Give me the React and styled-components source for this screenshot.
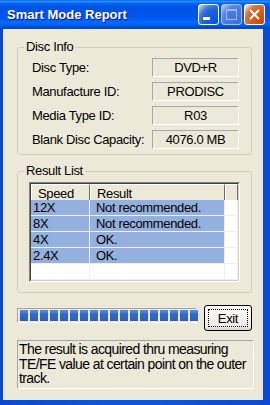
import React from 'react';
import styled, { createGlobalStyle, css } from 'styled-components';

const Global = createGlobalStyle`
  html, body {
    margin: 0;
    padding: 0;
    width: 270px;
    height: 405px;
    overflow: hidden;
    background: #0c55e0;
  }
  body {
    font-family: "Liberation Sans", Arial, sans-serif;
    font-size: 13px;
    letter-spacing: -0.35px;
    color: #000;
  }
`;

const discInfo = [
  ['Disc Type:', 'DVD+R'],
  ['Manufacture ID:', 'PRODISC'],
  ['Media Type ID:', 'R03'],
  ['Blank Disc Capacity:', '4076.0 MB'],
];

const results = [
  ['12X', 'Not recommended.'],
  ['8X', 'Not recommended.'],
  ['4X', 'OK.'],
  ['2.4X', 'OK.'],
];

const Window = styled.div`
  width: 270px;
  height: 405px;
  display: flex;
  flex-direction: column;
  background: linear-gradient(90deg, #0a49d6 0%, #0c55e0 40%, #0c55e0 60%, #0a49d6 100%);
`;

const TitleBar = styled.div`
  height: 29px;
  flex: none;
  display: flex;
  align-items: center;
  justify-content: space-between;
  background: linear-gradient(
    to bottom,
    #0058ee 0%, #3593ff 4%, #288eff 6%, #127dff 8%, #036ffc 10%,
    #0262ee 14%, #0057e5 20%, #0054e3 24%, #0055eb 56%, #005bf5 66%,
    #026afe 76%, #0062ef 86%, #0052d6 92%, #0046c4 96%, #0a49d6 100%
  );
`;

const Title = styled.div`
  padding-left: 7px;
  color: #fff;
  font-weight: bold;
  font-size: 13px;
  letter-spacing: 0;
  text-shadow: 1px 1px #0f1089;
`;

const Controls = styled.div`
  display: flex;
  gap: 2px;
  margin-right: 5px;
`;

const capStyles = {
  min: css`
    background: radial-gradient(circle at 90% 90%, #0054e9 0%, #2263d5 55%, #4479e4 70%, #a3bbec 90%, #fff 100%);
  `,
  max: css`
    background: radial-gradient(circle at 90% 90%, #3d6fe0 0%, #4a7ae0 55%, #5a86e6 70%, #9fb7ec 90%, #c9d6f4 100%);
    border-color: #a9bff0;
  `,
  close: css`
    background: radial-gradient(circle at 90% 90%, #cc4600 0%, #dc6527 55%, #cd7546 70%, #ffccb2 90%, #fff 100%);
  `,
};

const CapButton = styled.div`
  width: 21px;
  height: 21px;
  box-sizing: border-box;
  border: 1px solid #fff;
  border-radius: 3px;
  display: flex;
  align-items: center;
  justify-content: center;
  ${(p) => capStyles[p.$kind]}
`;

const Body = styled.div`
  flex: 1;
  margin: 0 7px 5px 3px;
  background: #ece9d8;
  padding: 11px 11px 0 14px;
  display: flex;
  flex-direction: column;
`;

const Group = styled.fieldset`
  margin: ${(p) => (p.$first ? '0' : '9px 0 0')};
  padding: 0;
  border: 1px solid #d0d0bf;
  border-radius: 3px;
  min-width: 0;
`;

const Legend = styled.legend`
  margin-left: 6px;
  padding: 0 2px;
  font-size: 13px;
  line-height: 14px;
`;

const GroupBody = styled.div`
  padding: ${(p) => p.$pad};
`;

const InfoGrid = styled.div`
  display: grid;
  grid-template-columns: 1fr 87px;
  row-gap: 5px;
  align-items: center;
`;

const Label = styled.div`
  line-height: 19px;
`;

const ValueBox = styled.div`
  height: 19px;
  box-sizing: border-box;
  border: 1px solid;
  border-color: #a7a6aa #fff #fff #a7a6aa;
  text-align: center;
  line-height: 17px;
`;

const ListView = styled.div`
  height: 100px;
  box-sizing: border-box;
  border: 1px solid;
  border-color: #7f7f7f #fff #fff #7f7f7f;
  background: #fff;
  overflow: hidden;
`;

const ListInner = styled.div`
  height: 100%;
  box-sizing: border-box;
  border: 1px solid;
  border-color: #404040 #d4d0c8 #d4d0c8 #404040;
`;

const ListGrid = styled.div`
  display: grid;
  grid-template-columns: 59px 135px 1fr;
  grid-auto-rows: 16px;
`;

const HeaderCell = styled.div`
  height: 20px;
  box-sizing: border-box;
  background: #ece9d8;
  border: 1px solid;
  border-color: #fff #716f64 #716f64 #fff;
  padding-left: ${(p) => p.$pad}px;
  line-height: 18px;
`;

const Cell = styled.div`
  box-sizing: border-box;
  border-right: 1px solid #f0f0f0;
  border-bottom: 1px solid #f0f0f0;
  background: ${(p) => (p.$sel ? '#93b0de' : '#fff')};
  padding-left: ${(p) => p.$pad}px;
  line-height: 15px;
  white-space: nowrap;
`;

const ActionRow = styled.div`
  margin-top: 12px;
  display: flex;
  justify-content: space-between;
  align-items: flex-start;
`;

const Progress = styled.div`
  margin-top: 3px;
  width: 180px;
  height: 15px;
  box-sizing: border-box;
  border: 1px solid;
  border-color: #a7a6aa #fff #fff #a7a6aa;
  padding: 1px 2px;
  display: flex;
  gap: 2px;
`;

const Block = styled.div`
  width: 8px;
  flex: none;
  background: linear-gradient(#5d8ee3, #3169c6 40%, #2a5fbd);
`;

const ExitButton = styled.div`
  width: 48px;
  height: 26px;
  box-sizing: border-box;
  border: 1px solid #000;
  border-radius: 3px;
  background: linear-gradient(180deg, #fff 0%, #f4f3ee 40%, #ecebe6 86%, #d6d0c5 100%);
  padding: 3px;
`;

const FocusRing = styled.div`
  height: 100%;
  box-sizing: border-box;
  border: 1px dotted #000;
  display: flex;
  align-items: center;
  justify-content: center;
  font-size: 13px;
`;

const Note = styled.div`
  margin-top: 9px;
  width: 237px;
  height: 49px;
  box-sizing: border-box;
  border: 1px solid;
  border-color: #a7a6aa #fff #fff #a7a6aa;
  padding: 1px 4px 0 1px;
  font-size: 14px;
  letter-spacing: -0.6px;
  line-height: 14.5px;
`;

export default function App() {
  return (
    <>
      <Global />
      <Window>
        <TitleBar>
          <Title>Smart Mode Report</Title>
          <Controls>
            <CapButton $kind="min">
              <svg width="19" height="19" viewBox="0 0 19 19">
                <rect x="4" y="12" width="7" height="3" fill="#fff" />
              </svg>
            </CapButton>
            <CapButton $kind="max">
              <svg width="19" height="19" viewBox="0 0 19 19">
                <rect x="4.5" y="4.5" width="10" height="10" fill="none" stroke="#9fb5ea" />
                <rect x="4" y="4" width="11" height="2" fill="#9fb5ea" />
              </svg>
            </CapButton>
            <CapButton $kind="close">
              <svg width="19" height="19" viewBox="0 0 19 19">
                <path d="M5 5 L14 14 M14 5 L5 14" stroke="#fff" strokeWidth="2" />
              </svg>
            </CapButton>
          </Controls>
        </TitleBar>
        <Body>
          <Group $first>
            <Legend>Disc Info</Legend>
            <GroupBody $pad="4px 12px 5px 14px">
              <InfoGrid>
                {discInfo.map(([label, value]) => (
                  <React.Fragment key={label}>
                    <Label>{label}</Label>
                    <ValueBox>{value}</ValueBox>
                  </React.Fragment>
                ))}
              </InfoGrid>
            </GroupBody>
          </Group>
          <Group>
            <Legend>Result List</Legend>
            <GroupBody $pad="4px 11px 10px 11px">
              <ListView>
                <ListInner>
                  <ListGrid>
                    <HeaderCell $pad={6}>Speed</HeaderCell>
                    <HeaderCell $pad={6}>Result</HeaderCell>
                    <HeaderCell $pad={0} />
                    {results.map(([speed, result]) => (
                      <React.Fragment key={speed}>
                        <Cell $sel $pad={2}>{speed}</Cell>
                        <Cell $sel $pad={6}>{result}</Cell>
                        <Cell />
                      </React.Fragment>
                    ))}
                    <Cell />
                    <Cell />
                    <Cell />
                  </ListGrid>
                </ListInner>
              </ListView>
            </GroupBody>
          </Group>
          <ActionRow>
            <Progress>
              {Array.from({ length: 18 }, (_, i) => (
                <Block key={i} />
              ))}
            </Progress>
            <ExitButton>
              <FocusRing>Exit</FocusRing>
            </ExitButton>
          </ActionRow>
          <Note>
            The result is acquired thru measuring TE/FE value at certain point on the outer track.
          </Note>
        </Body>
      </Window>
    </>
  );
}
